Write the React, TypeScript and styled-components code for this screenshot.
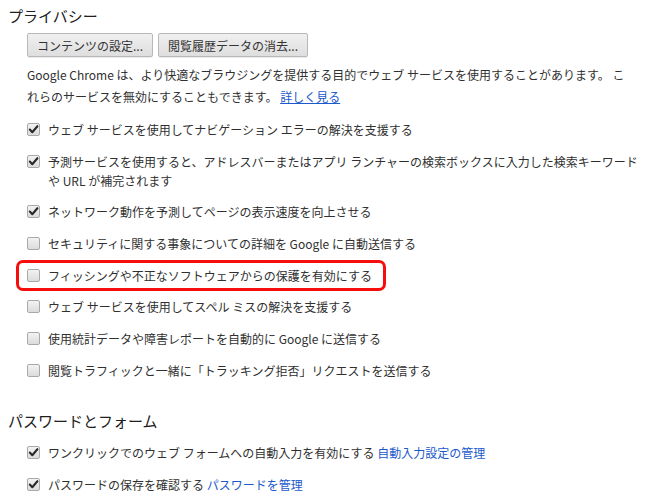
import React from 'react';
import styled, { createGlobalStyle } from 'styled-components';

const GlobalStyle = createGlobalStyle`
  html, body {
    margin: 0;
    padding: 0;
    background: #ffffff;
  }
  body {
    font-family: "Noto Sans CJK JP", "Open Sans", sans-serif;
    color: #303030;
  }
`;

const Page = styled.div`
  width: 654px;
  padding: 6px 14px 0 8px;
  box-sizing: border-box;
`;

const Section = styled.section`
  margin-bottom: 31px;

  &:last-child {
    margin-bottom: 0;
  }
`;

const SectionTitle = styled.h3`
  margin: 0;
  font-size: 15px;
  font-weight: 400;
  line-height: 20px;
  color: #202020;
`;

const SectionBody = styled.div`
  padding-left: 19px;
`;

const ButtonRow = styled.div`
  display: flex;
  gap: 5px;
  margin-top: 7px;
`;

const Button = styled.button`
  height: 24px;
  padding: 0 9px;
  font-family: inherit;
  font-size: 12px;
  color: #333;
  border: 1px solid #b8b8b8;
  border-radius: 2px;
  background: linear-gradient(#f0f0f0, #dedede);
  box-shadow: 0 1px 0 rgba(0, 0, 0, 0.08);
`;

const Description = styled.p`
  max-width: 600px;
  margin: 7px 0 12px;
  font-size: 12px;
  line-height: 22px;
`;

const Link = styled.a<{ $underline?: boolean }>`
  color: #1a5acb;
  text-decoration: ${({ $underline }) => ($underline ? 'underline' : 'none')};
  cursor: pointer;
`;

const CheckList = styled.div<{ $first?: boolean }>`
  display: flex;
  flex-direction: column;
  gap: 12.7px;
  margin-top: ${({ $first }) => ($first ? '12px' : '0')};
`;

const CheckRow = styled.label<{ $highlight?: boolean }>`
  display: flex;
  align-items: flex-start;
  font-size: 12px;
  line-height: 19px;
  ${({ $highlight }) =>
    $highlight &&
    `
    align-self: flex-start;
    margin: -6px 0 -6px -11px;
    padding: 3px 11px 3px 8px;
    border: 3px solid #f80d0d;
    border-radius: 7px;
  `}
`;

const Box = styled.span`
  flex: 0 0 auto;
  width: 13px;
  height: 13px;
  margin-top: 3px;
  margin-right: 8px;
  box-sizing: border-box;
  border: 1px solid #a9a9a9;
  border-radius: 2px;
  background: linear-gradient(#f2f2f2, #dcdcdc);
  display: flex;
  align-items: center;
  justify-content: center;
`;

const LabelText = styled.span`
  flex: 1 1 auto;
`;

interface CheckItemProps {
  checked?: boolean;
  highlight?: boolean;
  children: React.ReactNode;
}

const CheckItem: React.FC<CheckItemProps> = ({ checked, highlight, children }) => (
  <CheckRow $highlight={highlight}>
    <Box>
      {checked && (
        <svg width="11" height="11" viewBox="0 0 11 11">
          <path
            d="M1.8 5.6 L4.3 8.2 L9.4 2.2"
            fill="none"
            stroke="#2a2a2a"
            strokeWidth="2.1"
            strokeLinecap="round"
            strokeLinejoin="round"
          />
        </svg>
      )}
    </Box>
    <LabelText>{children}</LabelText>
  </CheckRow>
);

const App: React.FC = () => {
  return (
    <>
      <GlobalStyle />
      <Page>
        <Section>
          <SectionTitle>プライバシー</SectionTitle>
          <SectionBody>
            <ButtonRow>
              <Button>コンテンツの設定...</Button>
              <Button>閲覧履歴データの消去...</Button>
            </ButtonRow>
            <Description>
              Google Chrome は、より快適なブラウジングを提供する目的でウェブ
              サービスを使用することがあります。 これらのサービスを無効にすることもできます。{' '}
              <Link $underline>詳しく見る</Link>
            </Description>
            <CheckList>
              <CheckItem checked>ウェブ サービスを使用してナビゲーション エラーの解決を支援する</CheckItem>
              <CheckItem checked>
                予測サービスを使用すると、アドレスバーまたはアプリ ランチャーの検索ボックスに入力した検索キーワードや URL が補完されます
              </CheckItem>
              <CheckItem checked>ネットワーク動作を予測してページの表示速度を向上させる</CheckItem>
              <CheckItem>セキュリティに関する事象についての詳細を Google に自動送信する</CheckItem>
              <CheckItem highlight>フィッシングや不正なソフトウェアからの保護を有効にする</CheckItem>
              <CheckItem>ウェブ サービスを使用してスペル ミスの解決を支援する</CheckItem>
              <CheckItem>使用統計データや障害レポートを自動的に Google に送信する</CheckItem>
              <CheckItem>閲覧トラフィックと一緒に「トラッキング拒否」リクエストを送信する</CheckItem>
            </CheckList>
          </SectionBody>
        </Section>
        <Section>
          <SectionTitle>パスワードとフォーム</SectionTitle>
          <SectionBody>
            <CheckList $first>
              <CheckItem checked>
                ワンクリックでのウェブ フォームへの自動入力を有効にする <Link>自動入力設定の管理</Link>
              </CheckItem>
              <CheckItem checked>
                パスワードの保存を確認する <Link>パスワードを管理</Link>
              </CheckItem>
            </CheckList>
          </SectionBody>
        </Section>
      </Page>
    </>
  );
};

export default App;
